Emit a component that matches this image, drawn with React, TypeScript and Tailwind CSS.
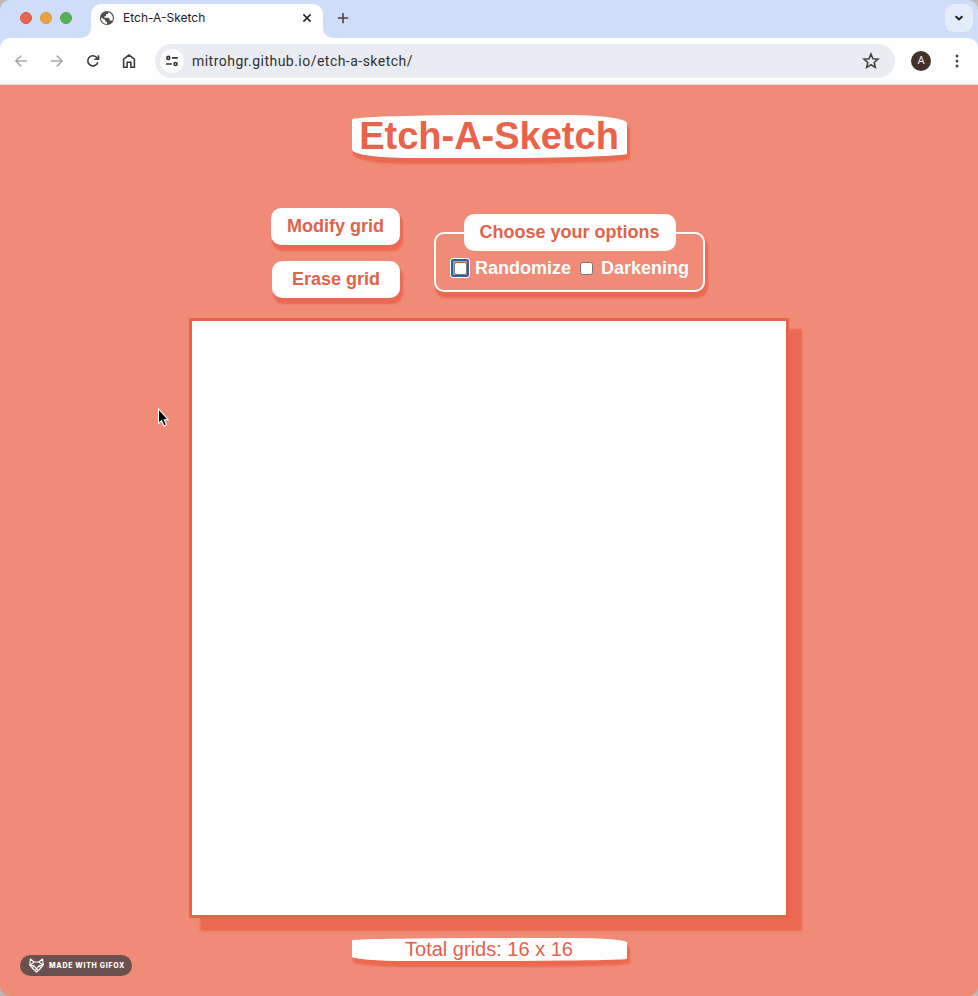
import { ReactNode } from "react";

function Icon({ children, size = 16, className = "" }: { children: ReactNode; size?: number; className?: string }) {
  return (
    <svg width={size} height={size} viewBox="0 0 16 16" fill="none" stroke="currentColor" strokeWidth="1.6" className={`shrink-0 ${className}`}>
      {children}
    </svg>
  );
}

function TabStrip() {
  return (
    <div className="flex h-[38px] items-end bg-[#d0ddf8]">
      <div className="flex h-[38px] w-[91px] items-center gap-2 pb-[2px] pl-5">
        <span className="h-3 w-3 rounded-full border border-[#d9543f] bg-[#e9644e]" />
        <span className="h-3 w-3 rounded-full border border-[#dc9536] bg-[#eba340]" />
        <span className="h-3 w-3 rounded-full border border-[#4fa94c] bg-[#58b255]" />
      </div>
      <div className="relative flex h-[34px] w-[232px] items-center rounded-t-[10px] bg-[#fefefe] pb-[6px] pl-[8px]">
        <svg width="10" height="10" viewBox="0 0 10 10" className="absolute bottom-0 -left-[10px]">
          <path d="M10 0V10H0A10 10 0 0 0 10 0Z" fill="#fefefe" />
        </svg>
        <svg width="10" height="10" viewBox="0 0 10 10" className="absolute -right-[10px] bottom-0">
          <path d="M0 0V10H10A10 10 0 0 1 0 0Z" fill="#fefefe" />
        </svg>
        <svg width="16" height="16" viewBox="0 0 16 16" className="shrink-0">
          <circle cx="8" cy="8" r="7.1" fill="#50504b" />
          <path d="M2 7.6L6.2 10.1V11.5L8 12V14C4.6 14.2 1.8 11.3 2 7.6ZM9.3 2.2V3.7L7 4.6V6.2H5.4V7.7H9.6L10.8 9.3V10.5H12.6L13.3 10.9C15 7.2 12.8 3 9.3 2.2Z" fill="#fefefe" />
        </svg>
        <span className="ml-2 w-[177px] font-['Inter',sans-serif] text-[12px] leading-4 text-[#1f2022]">Etch-A-Sketch</span>
        <Icon className="-ml-[1px] text-[#27282a]">
          <path d="M4.4 4.4l7.2 7.2M11.6 4.4l-7.2 7.2" />
        </Icon>
      </div>
      <Icon className="mb-[12px] ml-[12px] text-[#444746]">
        <path d="M8 2.9v10.4M2.8 8h10.4" />
      </Icon>
      <div className="mr-[5px] mb-[6px] ml-auto flex h-7 w-7 items-center justify-center rounded-[9px] bg-[#e6edfa] text-[#1c1d1f]">
        <Icon>
          <path d="M4.6 6.2L8 9.5l3.4-3.3" strokeWidth="1.9" />
        </Icon>
      </div>
    </div>
  );
}

function Toolbar() {
  return (
    <div className="h-[47px] bg-[#d0ddf8]">
      <div className="flex h-[47px] items-center rounded-t-[10px] border-b border-[#dcdedf] bg-[#fefefe] pl-[13px]">
        <Icon className="text-[#a6a8aa]">
          <path d="M14 8H3M8.2 2.6L2.8 8l5.4 5.4" strokeWidth="1.5" />
        </Icon>
        <Icon className="ml-5 text-[#a6a8aa]">
          <path d="M2 8h11M7.8 2.6L13.2 8l-5.4 5.4" strokeWidth="1.5" />
        </Icon>
        <Icon className="ml-5 text-[#3b3c3d]">
          <path d="M12.8 9.2A5.1 5.1 0 1 1 12 4.8L13.2 6M13.5 2.2v4.1H9.3" />
        </Icon>
        <Icon className="ml-5 text-[#3b3c3d]">
          <path d="M2.6 14.3V6.2L8 2l5.4 4.2v8.1H9.9V9.2H6.1v5.1Z" />
        </Icon>
        <div className="ml-[18px] flex h-[34px] w-[740px] items-center rounded-full bg-[#e9ecf1] pr-[15px] pl-[5px]">
          <div className="flex h-6 w-6 items-center justify-center rounded-full bg-[#fefefe] text-[#343536]">
            <Icon>
              <circle cx="4.3" cy="4.9" r="1.5" />
              <path d="M8 4.9h5.8M2 11h5.8" />
              <circle cx="11.6" cy="11" r="1.5" />
            </Icon>
          </div>
          <span className="ml-2 grow text-[14px] leading-5 tracking-[0.47px] text-[#303133]">mitrohgr.github.io/etch-a-sketch/</span>
          <Icon size={18} className="text-[#434445]">
            <path d="M8 1.8l1.75 4.15 4.5.4-3.4 2.95 1 4.4L8 11.35 4.15 13.7l1-4.4-3.4-2.95 4.5-.4Z" strokeWidth="1.4" />
          </Icon>
        </div>
        <div className="ml-4 flex h-5 w-5 items-center justify-center rounded-full bg-[#433329] text-[11px] text-[#f3eeee]">A</div>
        <svg width="16" height="16" viewBox="0 0 16 16" fill="#48494a" className="ml-[18px]">
          <circle cx="8" cy="2.9" r="1.5" />
          <circle cx="8" cy="8" r="1.5" />
          <circle cx="8" cy="13.1" r="1.5" />
        </svg>
      </div>
    </div>
  );
}

function Checkbox() {
  return <span className="block h-[13px] w-[13px] rounded-[2.5px] border border-[#767676] bg-[#fefefe]" />;
}

function Page() {
  return (
    <main className="relative flex h-[911px] flex-col items-center bg-[#f08b78] pt-[30px] font-['Liberation_Sans',Arial,sans-serif]">
      <h1 className="flex h-[43px] w-[275px] items-center justify-center rounded-[50%_20%_50%_20%/10%_20%_10%_20%] bg-[#fefefe] text-[38px] leading-[43px] font-bold text-[#e9624a] shadow-[2px_5px_2px_1px_#ec6951]">
        Etch-A-Sketch
      </h1>
      <div className="mt-[50px] mr-[3px] flex w-[435px] items-start justify-between">
        <div className="flex w-[130px] flex-col items-end gap-4">
          <button className="h-[37px] w-[129px] rounded-[10px] bg-[#fefefe] text-[18px] leading-[37px] font-bold text-[#e0634b] shadow-[2px_5px_2px_1px_#ec6951]">Modify grid</button>
          <button className="h-[37px] w-[128px] rounded-[10px] bg-[#fefefe] text-[18px] leading-[37px] font-bold text-[#e0634b] shadow-[2px_5px_2px_1px_#ec6951]">Erase grid</button>
        </div>
        <section className="mt-[24px] h-[60px] w-[271px] rounded-[10px] border-2 border-[#fefefe] shadow-[2px_5px_2px_1px_#ec6951]">
          <h2 className="mx-auto -mt-5 h-[37px] w-[212px] rounded-[10px] bg-[#fefefe] text-center text-[18px] leading-[37px] font-bold text-[#e0634b]">
            Choose your options
          </h2>
          <div className="mt-[7px] flex h-5 items-center pl-[14px] text-[18px] leading-5 font-bold text-[#fefefe]">
            <span className="flex h-5 w-5 items-center justify-center rounded-[3px] border border-[#fefefe]">
              <span className="flex h-[18px] w-[18px] items-center justify-center rounded-[3px] border-2 border-[#2860ae]">
                <Checkbox />
              </span>
            </span>
            <span className="ml-[5px] w-[105px]">Randomize</span>
            <Checkbox />
            <span className="ml-2">Darkening</span>
          </div>
        </section>
      </div>
      <div className="mt-5 h-[600px] w-[600px] shrink-0 border-[3px] border-[#e9624a] bg-[#fefefe] shadow-[12px_12px_2px_1px_#ec6951]" />
      <p className="mt-5 h-[23px] w-[275px] shrink-0 rounded-[50%_20%_50%_20%/10%_20%_10%_20%] bg-[#fefefe] text-center text-[20px] leading-[23px] text-[#e0634b] shadow-[2px_5px_2px_1px_#ec6951]">
        Total grids: 16 x 16
      </p>
      <svg width="16" height="24" viewBox="0 0 16 24" className="absolute top-[322px] left-[156px]">
        <path d="M2.5 2V16.5L5.6 13.6L8 19L10.5 17.8L8.2 12.7H12.2Z" fill="#090909" stroke="#fefefe" strokeWidth="1.1" />
      </svg>
      <div className="absolute bottom-5 left-5 flex h-[21px] w-28 items-center rounded-full bg-[#6a514d] pl-[9px] text-[#fefefe]">
        <svg width="15" height="15" viewBox="0 0 15 15" fill="none" stroke="currentColor" strokeWidth="1.1" strokeLinejoin="round">
          <path d="M1.4 1L5.2 4h4.6L13.6 1l.7 6.2L11.8 10 7.5 14.2 3.2 10 .7 7.2ZM5.2 4L.7 7.2l4.1.4 2.7 3.2 2.7-3.2 4.1-.4L9.8 4M3.2 10l1.6-2.4M11.8 10l-1.6-2.4M6.2 12.2l1.3-1.4 1.3 1.4" />
        </svg>
        <span className="ml-[5px] font-['Inter',sans-serif] text-[7px] leading-[10px] font-extrabold tracking-[0.7px] whitespace-nowrap">MADE WITH GIFOX</span>
      </div>
    </main>
  );
}

export default function App() {
  return (
    <div className="h-[996px] w-[978px] overflow-hidden bg-[#bcb8b8]">
      <div className="h-[996px] overflow-hidden rounded-[10px] font-['Roboto',sans-serif]">
        <TabStrip />
        <Toolbar />
        <Page />
      </div>
    </div>
  );
}
